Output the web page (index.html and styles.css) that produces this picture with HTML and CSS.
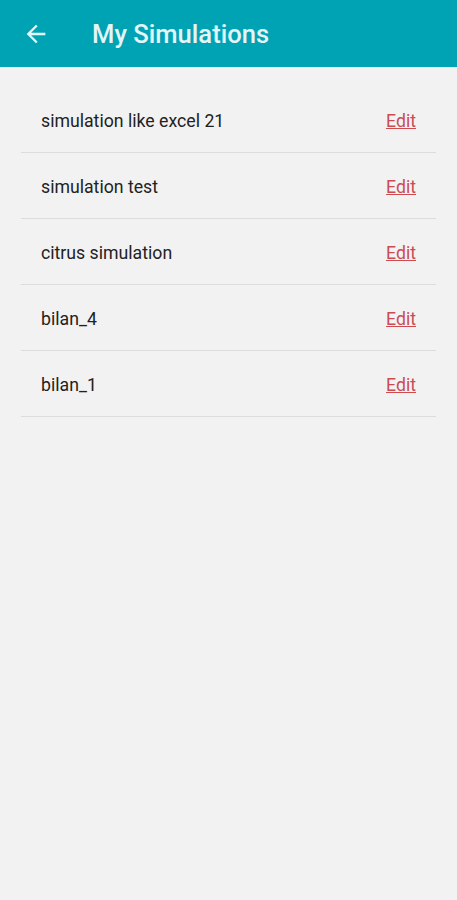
FILE: index.html
```html
<!DOCTYPE html>
<html lang="en">
<head>
<meta charset="UTF-8">
<meta name="viewport" content="width=device-width, initial-scale=1.0">
<title>My Simulations</title>
<link rel="stylesheet" href="styles.css">
</head>
<body>

<div class="topbar">
  <div class="back">
    <svg width="28" height="28" viewBox="0 0 24 24"><path d="M20 11H7.83l5.59-5.59L12 4l-8 8 8 8 1.41-1.41L7.83 13H20v-2z" fill="currentColor"/></svg>
  </div>
  <h1>My Simulations</h1>
</div>

<div class="list">
  <div class="item"><span>simulation like excel 21</span><a href="#">Edit</a></div>
  <div class="item"><span>simulation test</span><a href="#">Edit</a></div>
  <div class="item"><span>citrus simulation</span><a href="#">Edit</a></div>
  <div class="item"><span>bilan_4</span><a href="#">Edit</a></div>
  <div class="item"><span>bilan_1</span><a href="#">Edit</a></div>
</div>

</body>
</html>
```

FILE: styles.css
```css
body {
  margin: 0;
  font-family: Roboto, "Noto Sans", sans-serif;
  background: #f2f2f2;
  color: #222;
}

.topbar {
  height: 67px;
  background: #00a3b4;
  display: flex;
  align-items: center;
  color: #e3f5f7;
}

.back {
  width: 28px;
  height: 28px;
  margin-left: 22px;
  margin-right: 42px;
  display: flex;
}

.topbar h1 {
  margin: 0;
  font-size: 25.6px;
  font-weight: 500;
}

.list {
  margin: 20px 21px 0;
}

.item {
  height: 65px;
  border-bottom: 1px solid #dcdcdc;
  display: flex;
  align-items: center;
  justify-content: space-between;
  padding: 0 20px;
  font-size: 17.7px;
}

.item span {
  padding-top: 2px;
}

.item a {
  color: #cc4c52;
  text-decoration: underline;
  padding-top: 2px;
}
```
